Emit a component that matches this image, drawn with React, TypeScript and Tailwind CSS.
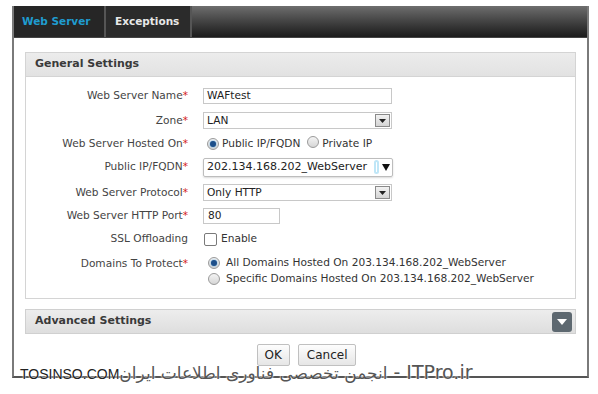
import React from "react";

const font = { fontFamily: '"DejaVu Sans", Verdana, sans-serif' };

function Label({ text, req }: { text: string; req?: boolean }) {
  return (
    <div className="w-[177px] shrink-0 text-right pr-[15px] text-[#444]">
      {text}
      {req && <span className="text-[#d42020]">*</span>}
    </div>
  );
}

function Radio({ checked }: { checked?: boolean }) {
  return (
    <span className="inline-flex w-[12px] h-[12px] rounded-full border border-[#9a9a9a] bg-gradient-to-b from-[#f4f4f4] to-[#d6d6d6] items-center justify-center shrink-0">
      {checked && <span className="w-[6px] h-[6px] rounded-full bg-[#1d4f8a] shadow-[0_0_2px_#4aa0e0]" />}
    </span>
  );
}

function DropBtn() {
  return (
    <span className="w-[15px] h-[13px] border border-[#8a8a8a] bg-gradient-to-b from-[#f2f2f2] to-[#d4d4d4] flex items-center justify-center">
      <svg width="7" height="4" viewBox="0 0 7 4"><path d="M0 0h7L3.5 4z" fill="#222" /></svg>
    </span>
  );
}

export default function App() {
  return (
    <div className="w-[598px] h-[394px] bg-white relative overflow-hidden text-[10.6px]" style={font}>
      <div className="ml-[12px] mt-[6px] w-[577px] h-[372px] border-l-2 border-r-2 border-b-2 border-[#7a7a7a] border-b-[#555] flex flex-col">
        {/* tab bar */}
        <div className="h-[32px] flex bg-gradient-to-b from-[#6e6e6e] to-[#1c1c1c] border-b border-[#444] shrink-0">
          <div className="w-[90px] bg-[#262626] flex items-center pl-[8px] font-bold text-[#1f9cd0] text-[10.5px]">Web Server</div>
          <div className="w-[2px] bg-[#555]" />
          <div className="w-[84px] bg-[#2b2b2b] flex items-center pl-[9px] font-bold text-[#e8e8e8] text-[10.5px]">Exceptions</div>
          <div className="w-[2px] bg-[#555]" />
        </div>

        <div className="flex-1 flex flex-col px-[11px] pt-[14px]">
          {/* General Settings */}
          <div className="border border-[#d4d4d4] h-[247px] flex flex-col">
            <div className="h-[24px] bg-gradient-to-b from-[#ececec] to-[#e2e2e2] border-b border-[#d4d4d4] flex items-center pl-[9px] font-bold text-[#3a3a3a] text-[11px]">
              General Settings
            </div>
            <div className="flex flex-col pt-[11px]">
              <div className="flex items-center h-[16px]">
                <Label text="Web Server Name" req />
                <div className="w-[189px] h-[16px] border border-[#c8c8c8] flex items-center pl-[3px] text-[#222]">WAFtest</div>
              </div>
              <div className="flex items-center h-[17px] mt-[8px]">
                <Label text="Zone" req />
                <div className="w-[189px] h-[17px] border border-[#c8c8c8] flex items-center justify-between pl-[3px] pr-[1px] text-[#222]">
                  LAN
                  <DropBtn />
                </div>
              </div>
              <div className="flex items-center h-[16px] mt-[7px]">
                <Label text="Web Server Hosted On" req />
                <div className="flex items-center text-[#333] ml-[4px]">
                  <Radio checked />
                  <span className="ml-[3px]">Public IP/FQDN</span>
                  <span className="ml-[7px]"><Radio /></span>
                  <span className="ml-[3px]">Private IP</span>
                </div>
              </div>
              <div className="flex items-center h-[18px] mt-[6px]">
                <Label text="Public IP/FQDN" req />
                <div className="w-[190px] h-[19px] border border-[#bdbdbd] rounded-[2px] shadow-[0_1px_2px_rgba(0,0,0,0.15)] flex items-center justify-between pl-[3px] pr-[2px] text-[#222] text-[11px]">
                  202.134.168.202_WebServer
                  <span className="flex items-center">
                    <span className="w-[5px] h-[14px] border-2 border-[#bfe6f7] rounded-full mr-[3px]" />
                    <svg width="8" height="7" viewBox="0 0 8 7"><path d="M0 0h8L4 7z" fill="#111" /></svg>
                  </span>
                </div>
              </div>
              <div className="flex items-center h-[17px] mt-[8px]">
                <Label text="Web Server Protocol" req />
                <div className="w-[189px] h-[17px] border border-[#c8c8c8] flex items-center justify-between pl-[3px] pr-[1px] text-[#222]">
                  Only HTTP
                  <DropBtn />
                </div>
              </div>
              <div className="flex items-center h-[16px] mt-[7px]">
                <Label text="Web Server HTTP Port" req />
                <div className="w-[77px] h-[16px] border border-[#c8c8c8] flex items-center pl-[4px] text-[#222]">80</div>
              </div>
              <div className="flex items-center h-[14px] mt-[8px]">
                <Label text="SSL Offloading" />
                <span className="w-[13px] h-[13px] border border-[#7a7a7a] rounded-[2px] bg-white ml-[1px]" />
                <span className="ml-[4px] text-[#333]">Enable</span>
              </div>
              <div className="flex mt-[10px]">
                <Label text="Domains To Protect" req />
                <div className="flex flex-col ml-[5px] text-[#333] gap-[2px]">
                  <div className="flex items-center h-[14px]">
                    <Radio checked />
                    <span className="ml-[6px]">All Domains Hosted On 203.134.168.202_WebServer</span>
                  </div>
                  <div className="flex items-center h-[14px]">
                    <Radio />
                    <span className="ml-[6px]">Specific Domains Hosted On 203.134.168.202_WebServer</span>
                  </div>
                </div>
              </div>
            </div>
          </div>

          {/* Advanced Settings */}
          <div className="mt-[10px] h-[25px] border border-[#d0d0d0] bg-gradient-to-b from-[#ededed] to-[#dedede] flex items-center justify-between pl-[9px] pr-[3px]">
            <span className="font-bold text-[#3a3a3a] text-[11px]">Advanced Settings</span>
            <span className="w-[20px] h-[20px] rounded-[3px] bg-[#5d6870] flex items-center justify-center">
              <svg width="10" height="6" viewBox="0 0 10 6"><path d="M0 0h10L5 6z" fill="#fff" /></svg>
            </span>
          </div>

          {/* Buttons */}
          <div className="flex justify-center gap-[8px] mt-[10px] pl-[12px]">
            <button className="h-[22px] px-[7px] border border-[#c0c0c0] rounded-[2px] bg-gradient-to-b from-[#fdfdfd] to-[#e6e6e6] text-[12px] text-[#222]">OK</button>
            <button className="h-[22px] px-[8px] border border-[#c0c0c0] rounded-[2px] bg-gradient-to-b from-[#fdfdfd] to-[#e6e6e6] text-[12px] text-[#222]">Cancel</button>
          </div>
        </div>
      </div>

      {/* watermark overlay */}
      <div
        dir="ltr"
        className="absolute left-[20px] top-[358px] flex items-baseline whitespace-nowrap"
        style={{ textShadow: "0 0 2px #fff, 0 0 2px #fff" }}
      >
        <span className="text-[14px] text-[#222]" style={{ fontFamily: '"Liberation Sans", sans-serif' }}>TOSINSO.COM</span>
        <span className="text-[17px] text-[#555]" style={{ fontFamily: '"DejaVu Sans", "Noto Sans", sans-serif' }}>{"انجمن تخصصی فناوری اطلاعات ایران"}</span>
        <span className="text-[19px] text-[#555]" style={{ fontFamily: '"DejaVu Sans", sans-serif' }}>&nbsp;- ITPro.ir</span>
      </div>
    </div>
  );
}
